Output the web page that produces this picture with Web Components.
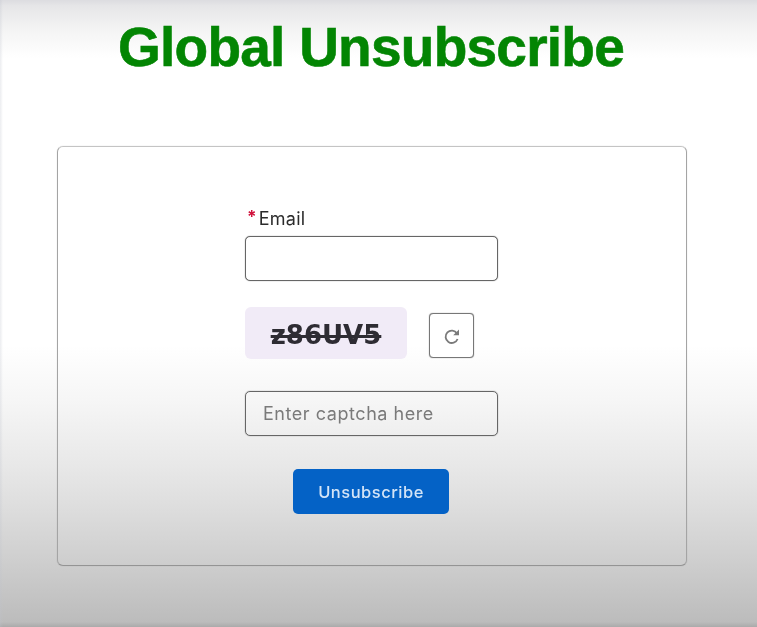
<!DOCTYPE html>
<html>
<head>
<meta charset="utf-8">
<title>Global Unsubscribe</title>
<style>
  html, body { margin: 0; height: 100%; }
  body {
    font-family: "Liberation Sans", Arial, sans-serif;
    overflow: hidden;
  }
</style>
</head>
<body>
<unsub-page>
  <unsub-card>
    <unsub-field label="Email" required></unsub-field>
    <unsub-captcha code="z86UV5"></unsub-captcha>
    <unsub-field placeholder="Enter captcha here"></unsub-field>
    <unsub-button>Unsubscribe</unsub-button>
  </unsub-card>
</unsub-page>

<script>
class UnsubPage extends HTMLElement {
    constructor() {
        super();
        let shadowRoot = this.attachShadow({mode:'open'});
        shadowRoot.innerHTML = `
        <style>
            :host {
                display: block;
                box-sizing: border-box;
                height: 627px;
                padding: 18px 70px 0 57px;
                filter: blur(0.45px);
                background:
                    linear-gradient(to right, rgba(190,194,204,.3), rgba(255,255,255,0) 3px),
                    linear-gradient(to bottom, #dcdce0 0, #e6e6e8 6px, #f4f4f4 30px, #fff 58px, #fff 345px, #f6f6f6 400px, #e8e8e8 465px, #dedede 505px, #cecece 562px, #bcbcbc 622px, #aaa 627px);
            }
            h1 {
                margin: 0 0 69px;
                padding-left: 61px;
                color: #038503;
                font-size: 55px;
                line-height: 59px;
                font-weight: 700;
                letter-spacing: -0.75px;
                -webkit-text-stroke: 0.6px #038503;
                white-space: nowrap;
            }
        </style>
        <h1>Global Unsubscribe</h1>
        <slot></slot>
        `;
    }
}

class UnsubCard extends HTMLElement {
    constructor() {
        super();
        let shadowRoot = this.attachShadow({mode:'open'});
        shadowRoot.innerHTML = `
        <style>
            :host {
                display: block;
                box-sizing: border-box;
                width: 630px;
                height: 420px;
                border: 1px solid #a4a4a4;
                border-top-color: #c4c4c4;
                border-bottom-color: #949494;
                border-radius: 6px;
                box-shadow: 0 0 1px rgba(0,0,0,.25);
            }
            .col {
                display: flex;
                flex-direction: column;
                width: 253px;
                margin-left: 187px;
                padding-top: 60px;
            }
        </style>
        <div class="col"><slot></slot></div>
        `;
    }
}

class UnsubField extends HTMLElement {
    constructor() {
        super();
        let shadowRoot = this.attachShadow({mode:'open'});
        let label = this.getAttribute('label');
        let placeholder = this.getAttribute('placeholder') || '';
        let star = this.hasAttribute('required') ? '<span class="req">*</span>' : '';
        shadowRoot.innerHTML = `
        <style>
            :host { display: block; font-family: Inter, "Liberation Sans", sans-serif; }
            label {
                display: flex;
                gap: 2px;
                height: 29px;
                padding-left: 2px;
                align-items: flex-start;
                color: #2b2b2b;
                font-size: 18px;
                line-height: 24px;
                letter-spacing: 0.25px;
            }
            .req {
                color: #d0103a;
                font-size: 17px;
                font-weight: 700;
                line-height: 20px;
            }
            .box {
                box-sizing: border-box;
                height: 45px;
                border: 1px solid #666;
                border-radius: 5px;
                box-shadow: 0 0 1px #666;
                background: #fff;
                padding: 0 17px;
                color: #7a7a7a;
                font-size: 18px;
                line-height: 44px;
                letter-spacing: 0.55px;
            }
            :host([placeholder]) .box { background: transparent; }
        </style>
        ${label ? `<label>${star}<span>${label}</span></label>` : ''}
        <div class="box">${placeholder}</div>
        `;
    }
}

class UnsubCaptcha extends HTMLElement {
    constructor() {
        super();
        let shadowRoot = this.attachShadow({mode:'open'});
        shadowRoot.innerHTML = `
        <style>
            :host {
                display: flex;
                align-items: flex-start;
                gap: 22px;
                margin: 26px 0 32px;
            }
            .code {
                display: flex;
                align-items: center;
                justify-content: center;
                box-sizing: border-box;
                width: 162px;
                height: 52px;
                padding-top: 4px;
                border-radius: 6px;
                background: #f1ebf7;
                color: #2e2c33;
                font-family: "DejaVu Sans", sans-serif;
                font-size: 26px;
                font-weight: 700;
                text-decoration: line-through;
                text-decoration-thickness: 2.5px;
            }
            button {
                display: flex;
                align-items: center;
                justify-content: center;
                box-sizing: border-box;
                width: 45px;
                height: 45px;
                margin-top: 6px;
                padding: 0;
                border: 1px solid #777;
                border-radius: 4px;
                box-shadow: 0 0 1px #777;
                background: #fff;
            }
        </style>
        <div class="code">${this.getAttribute('code')}</div>
        <button>
            <svg width="20" height="20" viewBox="0 0 20 20" fill="none">
                <path d="M15 7.4A6.2 6.2 0 1 0 15.6 13" stroke="#7a7a7a" stroke-width="1.8"/>
                <path d="M17 3.4v5.8h-5.8z" fill="#7a7a7a"/>
            </svg>
        </button>
        `;
    }
}

class UnsubButton extends HTMLElement {
    constructor() {
        super();
        let shadowRoot = this.attachShadow({mode:'open'});
        shadowRoot.innerHTML = `
        <style>
            :host {
                display: block;
                align-self: center;
                margin: 33px 1px 0 0;
            }
            button {
                display: block;
                box-sizing: border-box;
                width: 156px;
                height: 45px;
                padding: 0;
                border: 0;
                border-radius: 5px;
                background: #0462c6;
                color: #d3e4f7;
                font-family: Inter, "Liberation Sans", sans-serif;
                font-size: 16.5px;
                font-weight: 500;
                letter-spacing: 0.5px;
            }
        </style>
        <button><slot></slot></button>
        `;
    }
}

window.customElements.define('unsub-page', UnsubPage);
window.customElements.define('unsub-card', UnsubCard);
window.customElements.define('unsub-field', UnsubField);
window.customElements.define('unsub-captcha', UnsubCaptcha);
window.customElements.define('unsub-button', UnsubButton);
</script>
</body>
</html>
